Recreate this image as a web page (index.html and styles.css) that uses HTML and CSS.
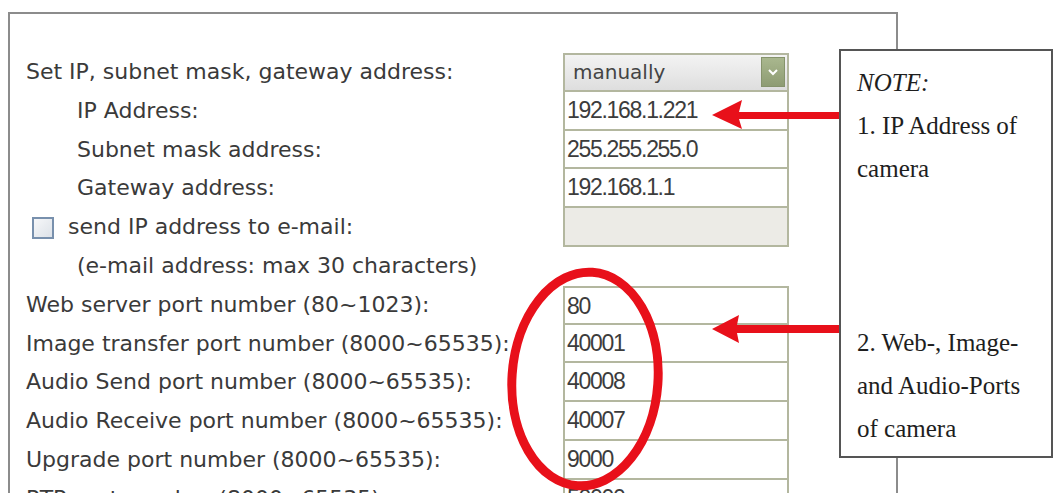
FILE: index.html
```html
<!DOCTYPE html>
<html lang="en">
<head>
    <meta charset="UTF-8">
    <meta name="viewport" content="width=device-width, initial-scale=1.0">
    <title>Network Settings</title>
    <link rel="stylesheet" href="styles.css">
</head>
<body>
    <div class="panel">
        <div class="form">
            <div class="label">Set IP, subnet mask, gateway address:</div>
            <div class="field select first">
                <span class="select-text">manually</span>
                <span class="select-btn">
                    <svg width="12" height="8" viewBox="0 0 12 8"><path d="M2 2 L6 6 L10 2" fill="none" stroke="#fff" stroke-width="2"/></svg>
                </span>
            </div>

            <div class="label sub">IP Address:</div>
            <div class="field">192.168.1.221</div>

            <div class="label sub">Subnet mask address:</div>
            <div class="field">255.255.255.0</div>

            <div class="label sub">Gateway address:</div>
            <div class="field">192.168.1.1</div>

            <div class="label check"><span class="checkbox"></span>send IP address to e-mail:</div>
            <div class="field disabled"></div>

            <div class="label sub">(e-mail address: max 30 characters)</div>
            <div></div>

            <div class="label">Web server port number (80~1023):</div>
            <div class="field first">80</div>

            <div class="label">Image transfer port number (8000~65535):</div>
            <div class="field">40001</div>

            <div class="label">Audio Send port number (8000~65535):</div>
            <div class="field">40008</div>

            <div class="label">Audio Receive port number (8000~65535):</div>
            <div class="field">40007</div>

            <div class="label">Upgrade port number (8000~65535):</div>
            <div class="field">9000</div>

            <div class="label">RTP port number (8000~65535):</div>
            <div class="field">50000</div>
        </div>
    </div>

    <!-- red annotation marks drawn over the form -->
    <svg class="marks" width="1056" height="493" viewBox="0 0 1056 493">
        <ellipse cx="585" cy="379" rx="73" ry="107" fill="none" stroke="#e8101a" stroke-width="9" transform="rotate(4 585 379)"/>
        <polygon points="712,115 742,100 739,112 840,112 840,119 739,119 742,129" fill="#e8101a"/>
        <polygon points="712,329 739,315 737,325 840,325 840,333 737,333 739,343" fill="#e8101a"/>
    </svg>

    <div class="note">
        <p class="note-title">NOTE:</p>
        <p>1. IP Address of<br>camera</p>
        <p class="note-second">2. Web-, Image-<br>and Audio-Ports<br>of camera</p>
    </div>
</body>
</html>
```

FILE: styles.css
```css
html, body {
    margin: 0;
    height: 100%;
    overflow: hidden;
    background: #fff;
}
.panel {
    margin: 12px 0 0 8px;
    width: 870px;
    height: 600px;
    border: 2px solid #8c8c8c;
    padding: 39px 0 0 16px;
    box-sizing: content-box;
}
.form {
    display: grid;
    grid-template-columns: 537px 226px;
    grid-auto-rows: 38.8px;
}
.label {
    font-family: "DejaVu Sans", Verdana, sans-serif;
    font-size: 22px;
    color: #3a3a3a;
    line-height: 38.8px;
    white-space: nowrap;
}
.label.sub {
    padding-left: 51px;
}
.label.check {
    display: flex;
    align-items: center;
    padding-left: 6px;
}
.checkbox {
    width: 18px;
    height: 18px;
    border: 2px solid #7890ad;
    background: linear-gradient(135deg, #f6f7f9, #dde2e8);
    margin-right: 14px;
}
.field {
    box-sizing: border-box;
    border: 2px solid #b3b79f;
    border-top: none;
    background: #fff;
    font-family: "Liberation Sans", Arial, sans-serif;
    font-size: 23px;
    letter-spacing: -1.3px;
    color: #3c3c3c;
    padding-left: 2px;
    line-height: 36px;
}
.field.first {
    border-top: 2px solid #b3b79f;
}
.field.disabled {
    background: #ecebe6;
}
.field.select {
    display: flex;
    align-items: center;
    justify-content: space-between;
    background: linear-gradient(#f3f3f3, #dedede);
    padding: 0 2px 0 8px;
}
.select-text {
    font-family: "DejaVu Sans", Verdana, sans-serif;
    font-size: 20px;
    letter-spacing: 0;
    color: #444;
}
.select-btn {
    width: 24px;
    height: 30px;
    box-sizing: border-box;
    border: 1px solid #86936c;
    background: linear-gradient(#a9b78e, #8e9c73);
    display: flex;
    align-items: center;
    justify-content: center;
}
.marks {
    position: absolute;
    top: 0;
    left: 0;
    pointer-events: none;
}
.note {
    position: absolute;
    left: 839px;
    top: 49px;
    width: 214px;
    height: 409px;
    border: 2px solid #555;
    background: #fff;
    padding: 10px 0 0 16px;
    box-sizing: border-box;
    font-family: "Liberation Serif", "Times New Roman", serif;
    font-size: 25px;
    line-height: 43px;
    color: #1e1e1e;
}
.note p {
    margin: 0;
}
.note-title {
    font-style: italic;
}
.note-second {
    margin-top: 131px !important;
}
```
